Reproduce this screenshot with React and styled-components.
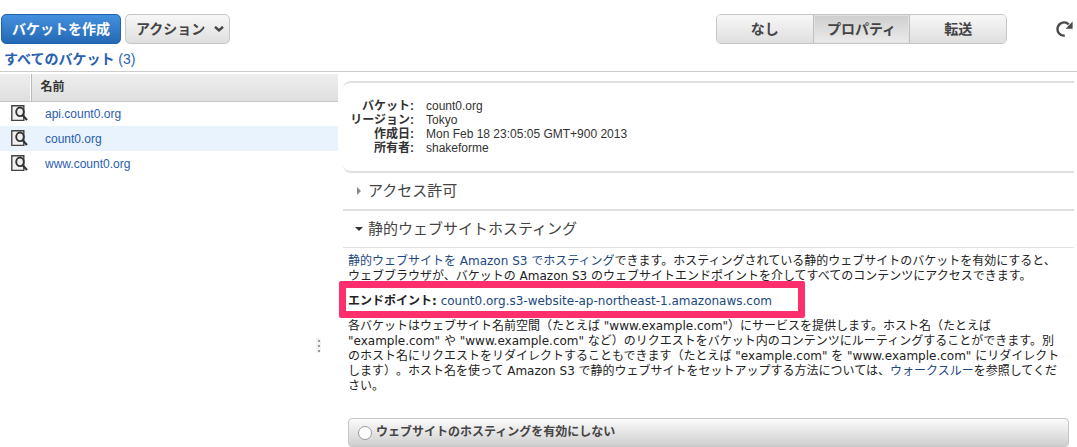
import React, { useState } from "react";
import styled, { createGlobalStyle } from "styled-components";

const Global = createGlobalStyle`
  * { box-sizing: border-box; }
  body {
    margin: 0;
    background: #fff;
    color: #333;
    font: 12px/14px "Liberation Sans", "Noto Sans CJK JP", sans-serif;
    text-spacing-trim: space-all;
  }
  a { text-decoration: none; }
  button, input { font: inherit; margin: 0; }
`;

const verdana = `"DejaVu Sans", "Noto Sans CJK JP", sans-serif`;

const Toolbar = styled.header`
  display: flex;
  gap: 4px;
  padding: 14px 3px 0 1px;
`;

const ToolButton = styled.button`
  display: flex;
  align-items: center;
  justify-content: center;
  gap: 9px;
  height: 30px;
  padding: 0 ${(p) => (p.$primary ? 10 : 5)}px 0 10px;
  border: 1px solid ${(p) => (p.$primary ? "#1f62ae" : "#c6c6c6")};
  border-radius: 5px;
  background: ${(p) =>
    p.$primary
      ? "linear-gradient(#4490df, #2468b4)"
      : "linear-gradient(#f7f7f7, #dfdfdf)"};
  color: ${(p) => (p.$primary ? "#fff" : "#444")};
  font-size: 14px;
  font-weight: bold;
  white-space: nowrap;
`;

const Segments = styled.div`
  display: flex;
  width: 291px;
  height: 30px;
  margin-left: auto;
  margin-right: 45px;
  border: 1px solid #c6c6c6;
  border-radius: 5px;
  overflow: hidden;
`;

const Segment = styled.button`
  flex: 1;
  padding: 0;
  border: 0;
  border-left: ${(p) => (p.$first ? 0 : 1)}px solid #c0c0c0;
  background: ${(p) =>
    p.$active
      ? "linear-gradient(#cecece, #ebebeb)"
      : "linear-gradient(#f7f7f7, #dfdfdf)"};
  box-shadow: ${(p) => (p.$active ? "inset 0 0 0 1px #e2e2e2" : "none")};
  color: #444;
  font-size: 14px;
  font-weight: bold;
`;

const RefreshButton = styled.button`
  display: flex;
  align-items: center;
  padding: 0;
  border: 0;
  background: none;
`;

const Crumbs = styled.nav`
  padding: 6px 4px 2px;
  border-bottom: 1px solid #ccc;
  font-size: 14px;
  line-height: 19px;
  a { color: #2962b0; }
  strong { font-weight: 600; }
`;

const Main = styled.main`
  display: flex;
  gap: 5px;
  padding: 2px 3px 0 0;
`;

const Side = styled.aside`
  flex: 0 0 338px;
`;

const BucketTable = styled.table`
  width: 100%;
  border-collapse: collapse;
  table-layout: fixed;
  th {
    height: 27px;
    padding: 0 9px;
    background: linear-gradient(#eee, #dfdfdf);
    border-bottom: 1px solid #c4c4c4;
    text-align: left;
  }
  th:first-child {
    width: 31px;
    border-right: 1px solid #bbb;
    box-shadow: inset -1px 0 #fff;
  }
  td { height: 25px; padding: 0 14px; }
  td:first-child { padding: 0 0 0 11px; }
  svg { display: block; }
`;

const BucketRow = styled.tr`
  background: ${(p) => (p.$selected ? "#e8f3fe" : "transparent")};
  a { color: #2a5db0; }
`;

const Grip = styled.div`
  display: flex;
  flex-direction: column;
  justify-content: space-around;
  align-items: center;
  width: 5px;
  height: 15px;
  margin: 162px 0 0 316px;
  background: #f3f3f3;
  i { width: 2px; height: 2px; background: #999; }
`;

const Details = styled.section`
  flex: 1;
  min-width: 0;
  padding-top: 7px;
`;

const Summary = styled.dl`
  display: grid;
  grid-template-columns: 71px 1fr;
  column-gap: 12px;
  margin: 0;
  padding: 16px 0;
  border: 0 solid #e0e0e0;
  border-width: 2px 0;
  border-radius: 8px 0 0 8px;
  dt { font-weight: bold; text-align: right; white-space: nowrap; }
  dd { margin: 0; }
`;

const SectionHeader = styled.h2`
  margin: 0;
  border-bottom: ${(p) => (p.$open ? 1 : 2)}px solid #e0e0e0;
  font-size: 15px;
  font-weight: normal;
  button {
    display: flex;
    align-items: center;
    gap: 5px;
    width: 100%;
    height: 36px;
    padding: 0 0 0 12px;
    border: 0;
    background: none;
    color: #444;
    text-align: left;
  }
`;

const Body = styled.div`
  padding: 6px 5px 0;
  color: #222;
  font: 12px/15px ${verdana};
  a { color: #1c4880; }
`;

const Para = styled.p`
  margin: 0;
  padding-right: 7px;
`;

const Endpoint = styled.p`
  position: relative;
  width: max-content;
  margin: 10px 0;
  &::after {
    content: "";
    position: absolute;
    inset: -13px -33px -9px -9px;
    border: 7px solid #ff2e6d;
    border-radius: 2px;
    pointer-events: none;
  }
`;

const Option = styled.label`
  display: flex;
  align-items: center;
  gap: 4px;
  height: 29px;
  margin-top: 24px;
  padding: 0 9px;
  border: 1px solid #c6c6c6;
  border-radius: 4px;
  background: linear-gradient(#fbfbfb, #cfcfcf);
  color: #444;
  font-weight: bold;
  input {
    appearance: none;
    width: 14px;
    height: 14px;
    border: 1px solid #999;
    border-radius: 50%;
    background: #fff;
  }
  input:checked { box-shadow: inset 0 0 0 3px #fff; background: #444; }
`;

const Chevron = () => (
  <svg width="10" height="6" viewBox="0 0 10 6" fill="none" stroke="#444" strokeWidth="2.4" aria-hidden="true">
    <path d="M1 .8l4 3.5L9 .8" />
  </svg>
);

const Refresh = () => (
  <svg width="18" height="18" viewBox="0 0 18 18" aria-hidden="true">
    <path d="M8.8 15.6A6.6 6.6 0 1 1 12.7 4.3" fill="none" stroke="#4a4a4a" strokeWidth="2.4" />
    <path d="M16.6 1.4v7.4H9.6z" fill="#4a4a4a" />
  </svg>
);

const Magnify = () => (
  <svg width="18" height="17" viewBox="0 0 18 17" aria-hidden="true">
    <path d="M.8.8h12v14.6H.8z" fill="#f1f1f1" stroke="#444" strokeWidth="1.4" />
    <ellipse cx="9" cy="6.8" rx="3.8" ry="4.3" fill="#eee" stroke="#333" strokeWidth="1.9" />
    <path d="M11.4 10l4.6 5" stroke="#333" strokeWidth="2.2" />
  </svg>
);

const Arrow = ({ open }) => (
  <svg width="8" height="8" viewBox="0 0 8 8" aria-hidden="true">
    <path d={open ? "M0 2h8L4 6z" : "M2 0l4 4-4 4z"} fill={open ? "#333" : "#888"} />
  </svg>
);

const buckets = ["api.count0.org", "count0.org", "www.count0.org"];
const views = ["なし", "プロパティ", "転送"];
const facts = [
  ["バケット:", "count0.org"],
  ["リージョン:", "Tokyo"],
  ["作成日:", "Mon Feb 18 23:05:05 GMT+900 2013"],
  ["所有者:", "shakeforme"],
];

export default function App() {
  const [view, setView] = useState("プロパティ");
  return (
    <>
      <Global />
      <Toolbar>
        <ToolButton $primary>バケットを作成</ToolButton>
        <ToolButton>アクション <Chevron /></ToolButton>
        <Segments>
          {views.map((v, i) => (
            <Segment key={v} $first={i === 0} $active={v === view} onClick={() => setView(v)}>
              {v}
            </Segment>
          ))}
        </Segments>
        <RefreshButton aria-label="更新"><Refresh /></RefreshButton>
      </Toolbar>
      <Crumbs>
        <a href="#all"><strong>すべてのバケット</strong> (3)</a>
      </Crumbs>
      <Main>
        <Side>
          <BucketTable>
            <thead>
              <tr><th /><th>名前</th></tr>
            </thead>
            <tbody>
              {buckets.map((b) => (
                <BucketRow key={b} $selected={b === "count0.org"}>
                  <td><Magnify /></td>
                  <td><a href={"#" + b}>{b}</a></td>
                </BucketRow>
              ))}
            </tbody>
          </BucketTable>
          <Grip><i /><i /><i /></Grip>
        </Side>
        <Details>
          <Summary>
            {facts.map(([k, v]) => (
              <React.Fragment key={k}>
                <dt>{k}</dt>
                <dd>{v}</dd>
              </React.Fragment>
            ))}
          </Summary>
          <SectionHeader>
            <button aria-expanded="false"><Arrow />アクセス許可</button>
          </SectionHeader>
          <SectionHeader $open>
            <button aria-expanded="true"><Arrow open />静的ウェブサイトホスティング</button>
          </SectionHeader>
          <Body>
            <Para>
              <a href="#hosting">静的ウェブサイトを Amazon S3 でホスティング</a>できます。ホスティングされている静的ウェブサイトのバケットを有効にすると、ウェブブラウザが、バケットの Amazon S3 のウェブサイトエンドポイントを介してすべてのコンテンツにアクセスできます。
            </Para>
            <Endpoint>
              <strong>エンドポイント:</strong>{" "}
              <a href="#endpoint">count0.org.s3-website-ap-northeast-1.amazonaws.com</a>
            </Endpoint>
            <Para>
              各バケットはウェブサイト名前空間（たとえば "www.example.com"）にサービスを提供します。ホスト名（たとえば "example.com" や "www.example.com" など）のリクエストをバケット内のコンテンツにルーティングすることができます。別のホスト名にリクエストをリダイレクトすることもできます（たとえば "example.com" を "www.example.com" にリダイレクトします）。ホスト名を使って Amazon S3 で静的ウェブサイトをセットアップする方法については、<a href="#walkthrough">ウォークスルー</a>を参照してください。
            </Para>
            <Option>
              <input type="radio" name="hosting" />
              ウェブサイトのホスティングを有効にしない
            </Option>
          </Body>
        </Details>
      </Main>
    </>
  );
}
